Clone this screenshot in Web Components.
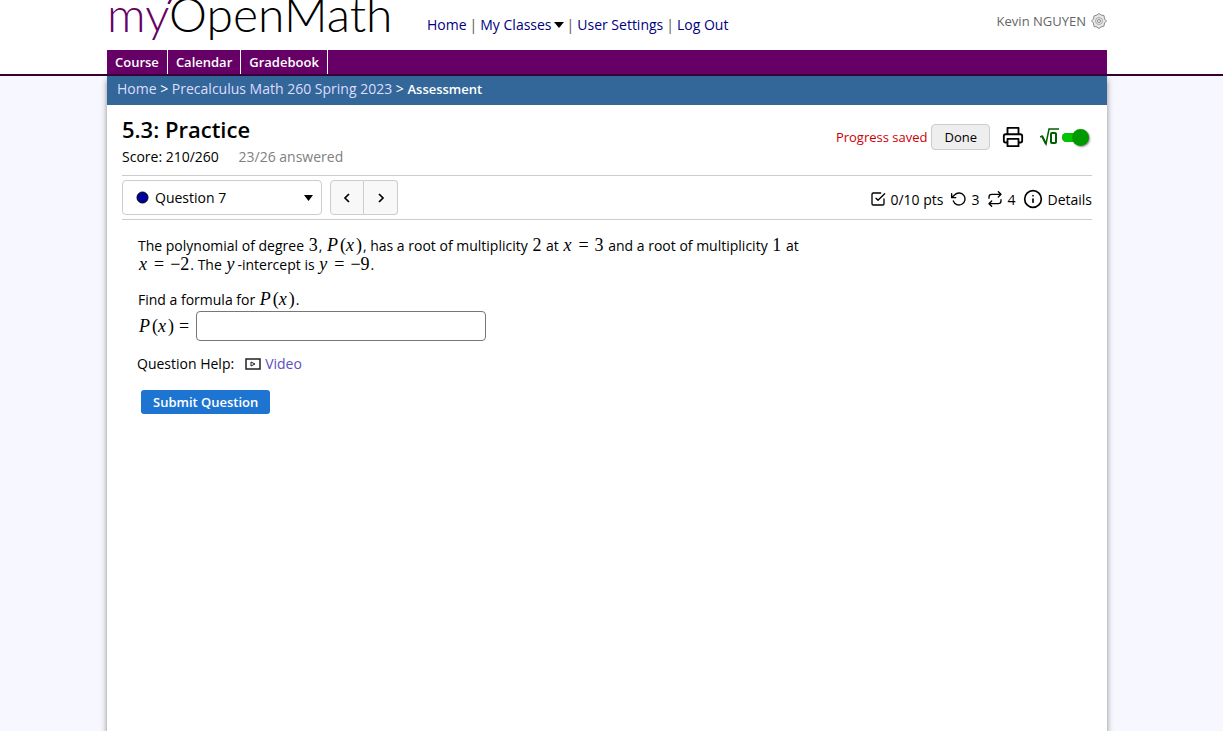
<!DOCTYPE html>
<html lang="en">
<head>
<meta charset="utf-8">
<title>myOpenMath</title>
<style>
body {
    margin: 0;
    min-height: 100vh;
    background: #f7f7ff;
    color: #000;
    font-family: "Trebuchet MS", "Open Sans", sans-serif;
    font-size: 14px;
    line-height: 20px;
}
</style>
</head>
<body>
<course-page></course-page>

<template id="course-page">
<style>
:host {
    display: flex;
    flex-direction: column;
    min-height: 100vh;
}
.top {
    background: white;
    border-bottom: 2px solid #330033;
}
.inner {
    width: calc(100% - 32px);
    max-width: 1000px;
    margin-left: max(16px, calc((100vw - 1009px) / 2));
}
.main {
    flex: 1;
    display: flex;
    flex-direction: column;
    background: white;
    box-shadow: 0 4px 6px #888;
    clip-path: inset(0 -12px);
}
</style>
<div class="top">
    <div class="inner">
        <site-header user="Kevin NGUYEN"></site-header>
        <course-tabs>
            <a href="#course">Course</a>
            <a href="#calendar">Calendar</a>
            <a href="#gradebook">Gradebook</a>
        </course-tabs>
    </div>
</div>
<div class="inner main">
    <bread-crumbs>
        <a href="#home">Home</a> &gt;
        <a href="#course">Precalculus Math 260 Spring 2023</a> &gt;
        <span>Assessment</span>
    </bread-crumbs>
    <assess-header score="210/260" answered="23/26">5.3: Practice</assess-header>
    <question-bar></question-bar>
    <question-body></question-body>
</div>
</template>

<template id="site-header">
<style>
:host {
    display: flex;
    align-items: flex-start;
    height: 50px;
    color: #000080;
}
a {
    color: inherit;
    text-decoration: none;
}
.logo {
    position: relative;
    width: 320px;
    color: black;
    font: 300 48px/28px Lato, sans-serif;
    white-space: nowrap;
}
.logo b {
    color: #660066;
    font-weight: 300;
}
.logo svg {
    position: absolute;
    left: 59px;
    top: 0;
}
nav {
    display: flex;
    gap: 3px;
    padding-top: 15px;
    white-space: nowrap;
}
nav svg {
    margin: 0 0 2px 2px;
}
.sep {
    color: #555;
}
.user {
    display: flex;
    align-items: center;
    gap: 5px;
    margin-left: auto;
    padding-top: 11px;
    color: #666;
    font-size: 13px;
}
</style>
<a class="logo" href="#home"><b>my</b>OpenMath<svg width="6" height="4"><path d="M5 -1L2.500 4" stroke="#660066" stroke-width="2.500"/></svg></a>
<nav>
    <a href="#home">Home</a><span class="sep">|</span>
    <a href="#classes">My Classes<svg width="10" height="6"><path d="M0 0h10L5 6z" fill="#000"/></svg></a><span class="sep">|</span>
    <a href="#settings">User Settings</a><span class="sep">|</span>
    <a href="#logout">Log Out</a>
</nav>
<a class="user" href="#user"><span id="name"></span>
    <svg width="16" height="16" viewBox="0 0 16 16" fill="#e8e8e8" stroke="#888"><path d="M6 2L8 .5 10 2 13 2.500 13.500 6 15.500 8 13.500 10 13 13 10 14 8 15.500 6 14 3 13.500 2.500 10 .5 8 2.500 6 3 3z"/><circle cx="8" cy="8" r="3.500" stroke="#aaa"/><circle cx="8" cy="8" r="1.500" fill="#fff"/></svg>
</a>
</template>

<template id="course-tabs">
<style>
:host {
    display: flex;
    height: 24px;
    background: #660066;
    font-size: 13px;
}
::slotted(a) {
    padding: 2px 8px;
    border-right: 1px solid white;
    color: white;
    font-weight: 600;
    text-decoration: none;
}
</style>
<slot></slot>
</template>

<template id="bread-crumbs">
<style>
:host {
    display: block;
    padding: 3px 10px 6px;
    background: #336699;
    color: white;
}
::slotted(a) {
    color: #ddddff;
    text-decoration: none;
}
::slotted(span) {
    font-size: 13px;
    font-weight: 600;
}
</style>
<slot></slot>
</template>

<template id="assess-header">
<style>
:host {
    display: flex;
    justify-content: space-between;
    align-items: center;
    margin: 0 15px;
    padding: 8px 0;
    border-bottom: 1px solid #ccc;
}
h1 {
    margin: 0 0 2px;
    font-size: 22px;
    font-weight: 600;
    line-height: 32px;
}
.answered {
    margin-left: 16px;
    color: #808080;
}
.actions {
    display: flex;
    align-items: center;
    padding-bottom: 6px;
    font-size: 13px;
}
.saved {
    margin-right: 4px;
    color: #c00;
}
button {
    font: inherit;
    cursor: pointer;
}
.done {
    padding: 2px 12px;
    border: 1px solid #ccc;
    border-radius: 4px;
    background: #eee;
}
.print {
    display: flex;
    margin: 0 16px 0 12px;
    padding: 0;
    border: 0;
    background: none;
}
</style>
<div>
    <h1><slot></slot></h1>
    <span>Score: <span id="score"></span></span>
    <span class="answered"><span id="answered"></span> answered</span>
</div>
<div class="actions">
    <span class="saved">Progress saved</span>
    <button class="done">Done</button>
    <button class="print" aria-label="Print">
        <svg width="22" height="22" viewBox="0 0 24 24" fill="none" stroke="#000" stroke-width="2" stroke-linecap="round" stroke-linejoin="round"><path d="M6 9V2h12v7M6 18H4a2 2 0 0 1-2-2v-5a2 2 0 0 1 2-2h16a2 2 0 0 1 2 2v5a2 2 0 0 1-2 2h-2M6 14h12v8H6z"/></svg>
    </button>
    <math-toggle></math-toggle>
</div>
</template>

<template id="math-toggle">
<style>
:host {
    display: block;
}
label {
    display: flex;
    align-items: center;
    gap: 3px;
    padding-right: 3px;
}
input {
    display: flex;
    align-items: center;
    justify-content: flex-end;
    width: 27px;
    height: 9px;
    margin: 0;
    appearance: none;
    background: #00c800;
    border-radius: 5px;
    box-shadow: inset 0 0 1px #006000;
}
input::before {
    content: "";
    flex: none;
    width: 17px;
    height: 17px;
    border-radius: 50%;
    background: #090;
    box-shadow: 1px 1px 2px #888;
}
</style>
<label>
    <svg width="19" height="18" fill="none" stroke="#006000"><path d="M0 9l2-1 4 8L9 1h10" stroke-width="1.500"/><path d="M2 8l4 8" stroke-width="2"/><rect x="11" y="5" width="5" height="10" rx="1" stroke-width="2"/></svg>
    <input type="checkbox" checked aria-label="Use equation editor">
</label>
</template>

<template id="question-bar">
<style>
:host {
    display: flex;
    align-items: center;
    margin: 0 15px;
    padding: 4px 0;
    border-bottom: 1px solid #ccc;
}
.picker {
    position: relative;
    flex: 0 1 200px;
}
select {
    box-sizing: border-box;
    width: 100%;
    height: 35px;
    padding: 0 32px;
    border: 1px solid #ccc;
    border-radius: 4px;
    appearance: none;
    background: white;
    color: black;
    font: inherit;
}
.dot,
.arrow {
    position: absolute;
    top: 11px;
    left: 14px;
    pointer-events: none;
}
.arrow {
    top: 15px;
    left: auto;
    right: 9px;
}
.pager {
    display: flex;
    margin-left: 8px;
}
.pager button {
    display: grid;
    place-items: center;
    width: 34px;
    height: 35px;
    padding: 0;
    border: 1px solid #ccc;
    border-radius: 4px 0 0 4px;
    background: #f8f8f8;
}
.pager button + button {
    border-left: 0;
    border-radius: 0 4px 4px 0;
}
.info {
    display: flex;
    align-items: center;
    gap: 8px;
    margin-left: auto;
    padding-top: 4px;
}
.info span,
.info button {
    display: flex;
    align-items: center;
    gap: 4px;
    padding: 0;
    border: 0;
    background: none;
    color: inherit;
    font: inherit;
}
.info svg {
    margin-bottom: 2px;
    fill: none;
    stroke: black;
    stroke-width: 2;
    stroke-linecap: round;
    stroke-linejoin: round;
}
</style>
<div class="picker">
    <select aria-label="Question">
        <option>Question 7</option>
    </select>
    <svg class="dot" width="13" height="13"><circle cx="6.500" cy="6.500" r="5.500" fill="#00009b" stroke="#000"/></svg>
    <svg class="arrow" width="9" height="6"><path d="M0 0h9L4.500 6z"/></svg>
</div>
<div class="pager">
    <button aria-label="Previous question"><svg width="8" height="10" fill="none" stroke="#000" stroke-width="1.700"><path d="M6 1L2 5l4 4"/></svg></button>
    <button aria-label="Next question"><svg width="8" height="10" fill="none" stroke="#000" stroke-width="1.700"><path d="M2 1l4 4-4 4"/></svg></button>
</div>
<div class="info">
    <span><svg width="16" height="16" viewBox="0 0 24 24"><path d="M9 11l3 3L22 4M21 12v7a2 2 0 0 1-2 2H5a2 2 0 0 1-2-2V5a2 2 0 0 1 2-2h11"/></svg>0/10 pts</span>
    <span><svg width="16" height="16" viewBox="0 0 24 24"><path d="M1 4v6h6M3.500 15a9 9 0 1 0 2.100-9.400L1 10"/></svg>3</span>
    <span><svg width="16" height="16" viewBox="0 0 24 24"><path d="M17 1l4 4-4 4M3 11V9a4 4 0 0 1 4-4h14M7 23l-4-4 4-4M21 13v2a4 4 0 0 1-4 4H3"/></svg>4</span>
    <button><svg width="20" height="20" viewBox="0 0 24 24"><circle cx="12" cy="12" r="10"/><path d="M12 16v-4M12 8h0"/></svg>Details</button>
</div>
</template>

<template id="math-text"><style>
:host {
    padding: 0 1px;
    font-family: "Liberation Serif", serif;
    font-size: 18px;
    line-height: 16px;
    white-space: nowrap;
}
::slotted(i) {
    padding-right: 2px;
}
::slotted(span) {
    padding: 0 6px 0 5px;
}
</style><slot></slot></template>

<template id="question-body">
<style>
:host {
    display: block;
    padding: 16px 30px;
}
.problem {
    max-width: 700px;
    padding-left: 1px;
    line-height: 19px;
}
p {
    margin: 0 0 16px;
}
.answer {
    display: flex;
    align-items: center;
    margin-top: 2px;
}
.answer input {
    box-sizing: border-box;
    flex: 0 1 290px;
    min-width: 0;
    height: 30px;
    border: 1px solid #777;
    border-radius: 4px;
    font: inherit;
}
.help {
    display: flex;
    align-items: center;
    margin: 13px 0 16px;
}
.help a {
    display: flex;
    align-items: center;
    gap: 4px;
    margin-left: 11px;
    color: #5a4fc0;
    text-decoration: none;
}
.submit {
    margin-left: 4px;
    padding: 2px 12px;
    border: 0;
    border-radius: 3px;
    background: #1e74d1;
    color: white;
    font: inherit;
    font-size: 13px;
    font-weight: 600;
}
</style>
<div class="problem">
    <p>The polynomial of degree <math-text>3</math-text>, <math-text><i>P</i>(<i>x</i>)</math-text>, has a root of multiplicity <math-text>2</math-text> at <math-text><i>x</i><span>=</span>3</math-text> and a root of multiplicity <math-text>1</math-text> at <math-text><i>x</i><span>=</span>−2</math-text>. The <math-text><i>y</i></math-text>-intercept is <math-text><i>y</i><span>=</span>−9</math-text>.</p>
    <div>Find a formula for <math-text><i>P</i>(<i>x</i>)</math-text>.</div>
    <label class="answer"><math-text><i>P</i>(<i>x</i>)<span>=</span></math-text><input type="text"></label>
</div>
<div class="help">Question Help:
    <a href="#video"><svg width="16" height="12" fill="none" stroke="#222"><rect x="1" y="1" width="14" height="10" stroke-width="1.500"/><path d="M6 4l4 2-4 2z"/></svg>Video</a>
</div>
<button class="submit">Submit Question</button>
</template>

<script>
class BaseElement extends HTMLElement {
    constructor() {
        super();
        const template = document.getElementById(this.localName);
        this.attachShadow({mode: 'open'});
        this.shadowRoot.appendChild(template.content.cloneNode(true));
    }
}

class SiteHeader extends BaseElement {
    connectedCallback() {
        this.shadowRoot.querySelector('#name').textContent = this.getAttribute('user');
    }
}

class AssessHeader extends BaseElement {
    connectedCallback() {
        this.shadowRoot.querySelector('#score').textContent = this.getAttribute('score');
        this.shadowRoot.querySelector('#answered').textContent = this.getAttribute('answered');
    }
}

customElements.define('site-header', SiteHeader);
customElements.define('assess-header', AssessHeader);
customElements.define('course-tabs', class extends BaseElement {});
customElements.define('bread-crumbs', class extends BaseElement {});
customElements.define('math-toggle', class extends BaseElement {});
customElements.define('math-text', class extends BaseElement {});
customElements.define('question-bar', class extends BaseElement {});
customElements.define('question-body', class extends BaseElement {});
customElements.define('course-page', class extends BaseElement {});
</script>
</body>
</html>
